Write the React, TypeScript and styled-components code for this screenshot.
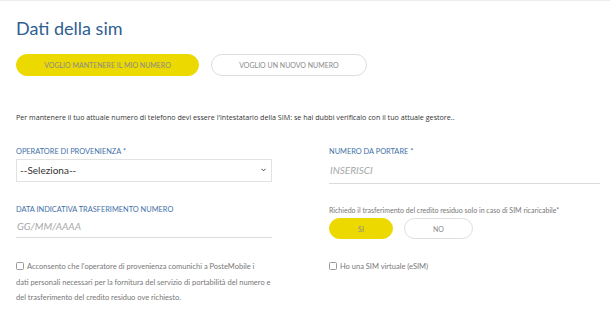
import React from 'react';
import styled, { createGlobalStyle } from 'styled-components';

const GlobalStyle = createGlobalStyle`
	html, body {
		margin: 0;
		padding: 0;
		background: #fff;
	}
	body {
		font-family: Lato, "Open Sans", sans-serif;
	}
`;

const Page = styled.div`
	width: 610px;
	height: 318px;
	box-sizing: border-box;
	border-top: 1px solid #ececec;
	padding: 0 16px;
	overflow: hidden;
`;

const Title = styled.h1`
	margin: 16px 0 0;
	font-size: 18px;
	line-height: 22px;
	font-weight: 400;
	color: #2f6092;
`;

const ChoiceRow = styled.div<{ $top: number; $gap: number }>`
	display: flex;
	gap: ${(p) => p.$gap}px;
	margin-top: ${(p) => p.$top}px;
`;

const Pill = styled.button<{ $active?: boolean; $width: number; $height: number }>`
	width: ${(p) => p.$width}px;
	height: ${(p) => p.$height}px;
	border-radius: ${(p) => p.$height / 2}px;
	border: 1px solid ${(p) => (p.$active ? '#ecd900' : '#dedede')};
	background: ${(p) => (p.$active ? '#ecd900' : '#fff')};
	color: #8a8a8a;
	font-family: Lato, sans-serif;
	font-size: 7px;
	text-transform: uppercase;
	padding: 0;
	cursor: pointer;
`;

const Intro = styled.p`
	margin: 36px 0 0;
	font-family: "Open Sans", sans-serif;
	font-size: 7.15px;
	line-height: 10px;
	color: #333;
`;

const FormGrid = styled.div`
	display: grid;
	grid-template-columns: 256px 271px;
	column-gap: 57px;
	row-gap: 21px;
	margin-top: 25px;
`;

const Field = styled.div`
	display: flex;
	flex-direction: column;
`;

const Label = styled.label<{ $plain?: boolean }>`
	font-family: Lato, sans-serif;
	font-size: ${(p) => (p.$plain ? '7px' : '7.4px')};
	line-height: 10px;
	color: ${(p) => (p.$plain ? '#777' : '#3f71a8')};
	text-transform: ${(p) => (p.$plain ? 'none' : 'uppercase')};
`;

const SelectWrap = styled.div`
	position: relative;
	margin-top: 1px;
	height: 23px;
`;

const Select = styled.select`
	appearance: none;
	width: 100%;
	height: 100%;
	border: 1px solid #e2e2e2;
	border-radius: 0;
	background: #fff;
	font-family: Lato, sans-serif;
	font-size: 10px;
	color: #333;
	padding: 0 3px;
	outline: none;
`;

const Chevron = styled.svg`
	position: absolute;
	right: 6px;
	top: 10px;
	width: 5px;
	height: 4px;
	pointer-events: none;
`;

const LineInput = styled.input<{ $height: number }>`
	height: ${(p) => p.$height}px;
	box-sizing: border-box;
	border: none;
	border-bottom: 1px solid #dcdcdc;
	padding: 0 1px;
	font-family: Lato, sans-serif;
	font-size: 10px;
	font-style: italic;
	color: #333;
	outline: none;
	&::placeholder {
		color: #a8a8a8;
	}
`;

const Consent = styled.p`
	margin: 0;
	font-family: Lato, sans-serif;
	font-size: 7.5px;
	line-height: 15.5px;
	color: #777;
	white-space: nowrap;
`;

const CheckBox = styled.span`
	display: inline-block;
	width: 6px;
	height: 6px;
	border: 1px solid #999;
	border-radius: 1.5px;
	margin-right: 3px;
	vertical-align: -1px;
`;

const ConsentGrid = styled(FormGrid)`
	margin-top: 20px;
`;

export default function App() {
	return (
		<Page>
			<GlobalStyle />
			<Title>Dati della sim</Title>

			<ChoiceRow $top={15} $gap={12}>
				<Pill $active $width={183} $height={22}>
					Voglio mantenere il mio numero
				</Pill>
				<Pill $width={156} $height={22}>
					Voglio un nuovo numero
				</Pill>
			</ChoiceRow>

			<Intro>
				Per mantenere il tuo attuale numero di telefono devi essere
				l'intestatario della SIM: se hai dubbi verificalo con il tuo
				attuale gestore..
			</Intro>

			<FormGrid>
				<Field>
					<Label>Operatore di provenienza *</Label>
					<SelectWrap>
						<Select defaultValue="">
							<option value="">--Seleziona--</option>
						</Select>
						<Chevron viewBox="0 0 5 4">
							<path d="M0.5 0.8 L2.5 2.8 L4.5 0.8" fill="none" stroke="#444" strokeWidth="1" />
						</Chevron>
					</SelectWrap>
				</Field>
				<Field>
					<Label>Numero da portare *</Label>
					<LineInput $height={27} placeholder="INSERISCI" />
				</Field>

				<Field>
					<Label>Data indicativa trasferimento numero</Label>
					<LineInput $height={23} placeholder="GG/MM/AAAA" />
				</Field>
				<Field>
					<Label $plain>
						Richiedo il trasferimento del credito residuo solo in
						caso di SIM ricaricabile*
					</Label>
					<ChoiceRow $top={3} $gap={11}>
						<Pill $active $width={64} $height={21}>
							SI
						</Pill>
						<Pill $width={69} $height={21}>
							NO
						</Pill>
					</ChoiceRow>
				</Field>
			</FormGrid>

			<ConsentGrid>
				<Consent>
					<CheckBox />
					Acconsento che l'operatore di provenienza comunichi a
					PosteMobile i
					<br />
					dati personali necessari per la fornitura del servizio di
					portabilità del numero e
					<br />
					del trasferimento del credito residuo ove richiesto.
				</Consent>
				<Consent>
					<CheckBox />
					Ho una SIM virtuale (eSIM)
				</Consent>
			</ConsentGrid>
		</Page>
	);
}
